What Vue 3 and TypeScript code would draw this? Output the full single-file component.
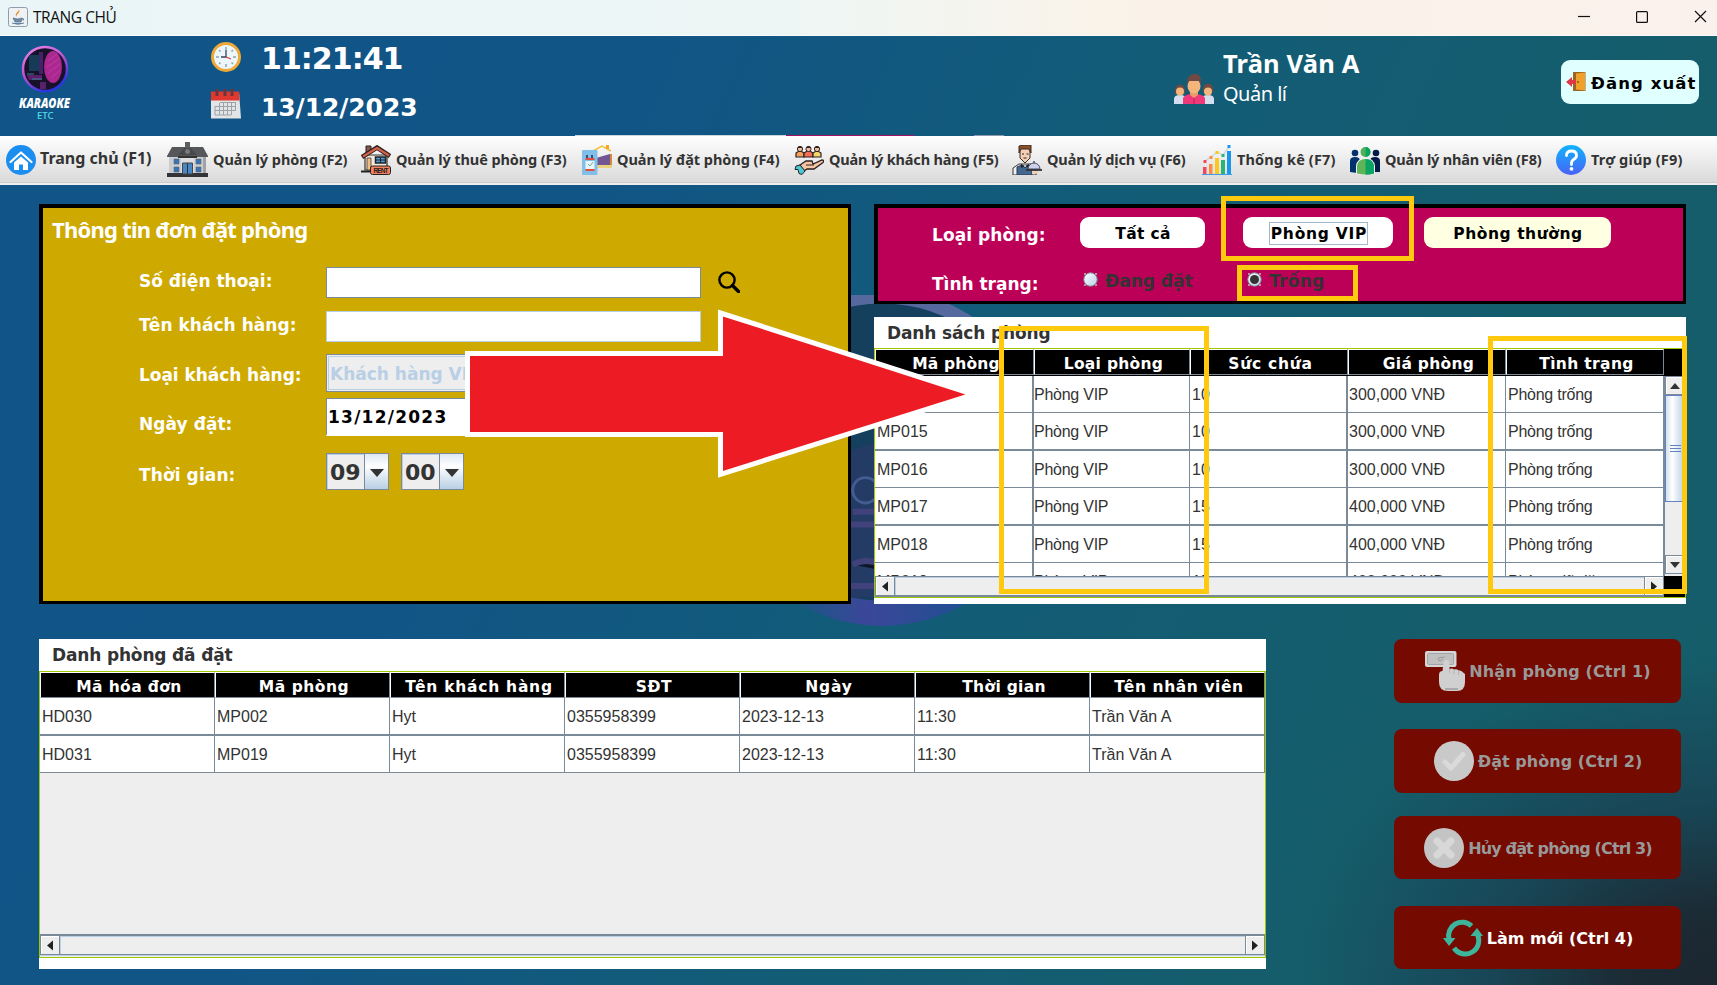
<script setup lang="ts">
import type { Directive } from 'vue'

interface MenuItem { icon: string; label: string; width: number; w: number; h: number; big?: boolean }
interface Action { icon: string; label: string; width: number; enabled: boolean }
interface Column { label: string; width: number }

// Spreads a label's letters so that it takes the given width.
const vFit: Directive<HTMLElement, number> = {
  mounted(el, { value }) {
    const count = Math.max(1, Array.from((el.textContent ?? '').trim()).length)
    const natural = el.getBoundingClientRect().width
    el.style.letterSpacing = `${((value + 1.5 - natural) / count).toFixed(3)}px`
  },
}

const menu: MenuItem[] = [
  { icon: 'home', label: 'Trang chủ (F1)', width: 110, w: 30, h: 30, big: true },
  { icon: 'building', label: 'Quản lý phòng (F2)', width: 133, w: 41, h: 35 },
  { icon: 'rent', label: 'Quản lý thuê phòng (F3)', width: 169, w: 30, h: 30 },
  { icon: 'booking', label: 'Quản lý đặt phòng (F4)', width: 161, w: 30, h: 30 },
  { icon: 'clients', label: 'Quản lý khách hàng (F5)', width: 168, w: 30, h: 30 },
  { icon: 'waiter', label: 'Quản lý dịch vụ (F6)', width: 137, w: 30, h: 30 },
  { icon: 'chart', label: 'Thống kê (F7)', width: 97, w: 30, h: 30 },
  { icon: 'staff', label: 'Quản lý nhân viên (F8)', width: 155, w: 30, h: 30 },
  { icon: 'help', label: 'Trợ giúp (F9)', width: 90, w: 30, h: 30 },
]

const roomColumns: Column[] = [
  { label: 'Mã phòng', width: 86 },
  { label: 'Loại phòng', width: 98 },
  { label: 'Sức chứa', width: 83 },
  { label: 'Giá phòng', width: 90 },
  { label: 'Tình trạng', width: 93 },
]

const rooms: string[][] = [
  ['MP014', 'Phòng VIP', '10', '300,000 VNĐ', 'Phòng trống'],
  ['MP015', 'Phòng VIP', '10', '300,000 VNĐ', 'Phòng trống'],
  ['MP016', 'Phòng VIP', '10', '300,000 VNĐ', 'Phòng trống'],
  ['MP017', 'Phòng VIP', '15', '400,000 VNĐ', 'Phòng trống'],
  ['MP018', 'Phòng VIP', '15', '400,000 VNĐ', 'Phòng trống'],
  ['MP019', 'Phòng VIP', '15', '400,000 VNĐ', 'Phòng đã đặt'],
]

const bookingColumns: Column[] = [
  { label: 'Mã hóa đơn', width: 104 },
  { label: 'Mã phòng', width: 89 },
  { label: 'Tên khách hàng', width: 146 },
  { label: 'SĐT', width: 35 },
  { label: 'Ngày', width: 46 },
  { label: 'Thời gian', width: 82 },
  { label: 'Tên nhân viên', width: 128 },
]

const bookings: string[][] = [
  ['HD030', 'MP002', 'Hyt', '0355958399', '2023-12-13', '11:30', 'Trần Văn A'],
  ['HD031', 'MP019', 'Hyt', '0355958399', '2023-12-13', '11:30', 'Trần Văn A'],
]

const actions: Action[] = [
  { icon: 'tap', label: 'Nhận phòng (Ctrl 1)', width: 180, enabled: false },
  { icon: 'check', label: 'Đặt phòng (Ctrl 2)', width: 163, enabled: false },
  { icon: 'cancel', label: 'Hủy đặt phòng (Ctrl 3)', width: 182, enabled: false },
  { icon: 'refresh', label: 'Làm mới (Ctrl 4)', width: 145, enabled: true },
]
</script>

<template>
  <div class="window">
    <svg class="defs" width="0" height="0" aria-hidden="true">
      <defs>
        <linearGradient id="gHelp" x1="0" y1="0" x2="0" y2="1"><stop offset="0" stop-color="#0fb4ff" /><stop offset="1" stop-color="#4a62f6" /></linearGradient>
        <linearGradient id="gRing" x1="0" y1="0" x2="0.5" y2="1"><stop offset="0" stop-color="#f08ae8" /><stop offset=".55" stop-color="#b84fd0" /><stop offset="1" stop-color="#2b35e0" /></linearGradient>
        <linearGradient id="gRadio" x1="0" y1="0" x2="1" y2="1"><stop offset="0" stop-color="#fff" /><stop offset="1" stop-color="#b8cfe5" /></linearGradient>
        <linearGradient id="gDisc" x1="0" y1="0" x2="1" y2="0"><stop offset="0.2" stop-color="#125a80" /><stop offset=".45" stop-color="#3b4799" /><stop offset=".8" stop-color="#1c4f90" /></linearGradient>
      </defs>
      <symbol id="home" viewBox="0 0 30 30">
        <circle cx="15" cy="15" r="15" fill="#1b8ef0" />
        <path d="M4.500 17 15 7.500 25.500 17" fill="none" stroke="#fff" stroke-width="2.200" stroke-linecap="round" stroke-linejoin="round" />
        <path d="M8 17.500 15 11.500l7 6V25h-5v-5.500h-4V25H8z" fill="#fff" />
      </symbol>
      <symbol id="building" viewBox="0 0 41 35">
        <path d="M2 14h37v18H2z" fill="#c9ccd0" /><path d="M14 13h13v19H14z" fill="#dcdee1" />
        <path d="M39 14v18h-3V14z" fill="#a0a2a6" />
        <path d="M0 14 5 5h31l5 9v1H0z" fill="#55575a" /><path d="M11 13 20.500 3 30 13z" fill="#46484b" /><path d="M11 14h19v2H11z" fill="#333" />
        <path d="M18 0h5v6h-5z" fill="#5e5e60" /><path d="M0 31h41v4H0z" fill="#333437" />
        <path d="M7 17h5v5H7zM7 25h5v5H7zM29 17h5v5h-5zM29 25h5v5h-5z" fill="#3674b8" stroke="#666" stroke-width=".6" />
        <path d="M15.500 21h10v11h-10z" fill="#4a87c6" stroke="#444" /><path d="M20.500 21v11" stroke="#333" />
        <circle cx="20.500" cy="9.500" r="2.500" fill="#77797c" />
      </symbol>
      <symbol id="rent" viewBox="0 0 30 30">
        <path d="M4 10h22v15H4z" fill="#f3e9df" stroke="#333" stroke-width="1.200" />
        <path d="M5 1h5v7H5z" fill="#8b5446" stroke="#222" /><path d="M1 12 16 2.500 29 11" fill="none" stroke="#33231f" stroke-width="4.500" /><path d="M2 11.500 16 3 28 10.500" fill="none" stroke="#d4634b" stroke-width="2.200" />
        <path d="M6 13h4v12H6z" fill="#f0bd80" stroke="#222" stroke-width=".7" /><path d="M14.500 12h10v6h-10z" fill="#4d9bdd" stroke="#222" stroke-width="1.500" /><path d="M19.500 12v6M14.500 15h10" stroke="#222" />
        <path d="M0 26.500h10" stroke="#222" stroke-width="2" />
        <rect x="9.500" y="21" width="20" height="8.500" rx="2" fill="#f5805f" stroke="#222" />
        <text x="12.500" y="27.800" font-family="Liberation Sans" font-weight="bold" font-size="6.500" textLength="15" fill="#222">RENT</text>
      </symbol>
      <symbol id="booking" viewBox="0 0 30 30">
        <path d="M11 6l9-5 9 5" fill="none" stroke="#f0c23e" stroke-width="1.500" /><path d="M24 0h3v4h-3z" fill="#f5a423" />
        <path d="M14 13l14-4v11H14z" fill="#725693" /><path d="M28 9h2v13h-2z" fill="#d68a35" /><path d="M14 20h16v3H14z" fill="#ead27e" />
        <rect x="0" y="5" width="15.500" height="25" rx="1" fill="#82bfe8" /><path d="M3.500 16h9v8h-9z" fill="#e8f5fc" />
        <path d="M4 10h2v3H4zM9 10h2v3H9z" fill="#39507b" /><path d="M3.500 13h9v2h-9zM3.500 24h9v2h-9z" fill="#e34c3d" /><path d="M6 19l2 2 3-4" stroke="#76ad8b" fill="none" />
      </symbol>
      <symbol id="clients" viewBox="0 0 30 30">
        <g stroke="#2c2020" stroke-width="1.200"><path d="M2 12V8l3-2h2l3 2v4z" fill="#f4a05a" /><path d="M10 12V8l3-2h3l3 2v4z" fill="#f26e54" /><path d="M19 12V8l3-2h2l3 2v4z" fill="#f4d568" /></g>
        <circle cx="6" cy="4" r="2.600" fill="#efc3a0" stroke="#2c2020" /><circle cx="14.500" cy="4" r="2.600" fill="#efc3a0" stroke="#2c2020" /><circle cx="23" cy="4" r="2.600" fill="#efc3a0" stroke="#2c2020" />
        <path d="M3.500 3a2.700 2.700 0 0 1 5 0zM12 3a2.700 2.700 0 0 1 5 0zM20.500 3a2.700 2.700 0 0 1 5 0z" fill="#2c2020" />
        <path d="M6 20l6-4h6l1 3 9-4c2 0 2 1.500 1 2.500L20 24h-7l-3 2z" fill="#f6c5a6" stroke="#2c2020" stroke-width="1.300" /><path d="M12 20h8" stroke="#2c2020" />
        <path d="M2 21l4-1 5 6-3 3.500-3-1-1-4H1z" fill="#49c8d6" stroke="#2c2020" />
      </symbol>
      <symbol id="waiter" viewBox="0 0 30 30">
        <path d="M1 30v-7l6-4h12l5 4v7z" fill="#f2f2f4" stroke="#333" /><path d="M5 30v-8l5-2 3 3 3-3 4 2v8z" fill="#42688f" stroke="#2a3b52" />
        <path d="M8 3h10v10l-5 5-5-5z" fill="#f4cfb4" stroke="#3b2a22" /><path d="M7 8V1l6-1h6v8l-2-4H9z" fill="#8a4f24" stroke="#3b2a22" /><path d="M10 9h2M14.500 9h2M11.500 13h3" stroke="#222" />
        <path d="M9 19l4 2 4-2v4l-4-2-4 2z" fill="#222" /><path d="M16 24a6 6 0 0 1 12 0z" fill="#cfd0ea" stroke="#444b66" /><path d="M14 25h16" stroke="#333" stroke-width="1.800" /><path d="M20 26h6l-2 3h-4z" fill="#f4cfb4" /><circle cx="22" cy="17" r="1" fill="#555" />
      </symbol>
      <symbol id="chart" viewBox="0 0 30 30">
        <path d="M1 22h3.500v7H1z" fill="#f2475b" /><path d="M7 19h3.500v10H7z" fill="#fb8b42" /><path d="M13 13h4v16h-4z" fill="#fbc91d" /><path d="M19 15h4v14h-4z" fill="#2ab573" /><path d="M25 6h4v23h-4z" fill="#1798ee" />
        <path d="M3 16 9 12l6-5 6 3 6-8" fill="none" stroke="#cad5e0" stroke-width="1.300" />
        <path d="M1.500 15h3v3h-3z" fill="#f2475b" /><path d="M7.500 11h3v3h-3z" fill="#fb8b42" /><path d="M13.500 6h3v3h-3z" fill="#fbc91d" /><path d="M19.500 9h3v3h-3z" fill="#2ab573" /><path d="M25.500 0h3v3h-3z" fill="#1798ee" /><path d="M0 29.500h30" stroke="#3c9ce5" />
      </symbol>
      <symbol id="staff" viewBox="0 0 30 30">
        <g fill="#03306e"><circle cx="5" cy="8" r="3.300" /><path d="M0 27V16q0-4 5-4t5 4v9l-3 3z" /></g><g fill="#031c48"><circle cx="26" cy="8" r="3.300" /><path d="M20 27V16q0-4 5-4t5 4v11z" /></g>
        <circle cx="15.500" cy="7" r="5" fill="#52b058" /><path d="M6 29V21q1-8 9.500-8T25 21v8q-9 2-19 0z" fill="#f1f1f1" /><path d="M7 28.500V21q1-7 8.500-7T24 21v7.500q-8.500 2-17 0z" fill="#5fb457" /><path d="M15.500 2a5 5 0 0 1 0 10M15.500 14q7.500 0 8.500 7v7.500q-4 1.200-8.500 1.200z" fill="#0aa563" />
      </symbol>
      <symbol id="help" viewBox="0 0 30 30">
        <circle cx="15" cy="15" r="15" fill="url(#gHelp)" />
        <path d="M10.500 10.500q0-4.500 5-4.500t5 4.500q0 2.300-2.500 3.700T15.500 18v1.500" fill="none" stroke="#fff" stroke-width="2.800" stroke-linecap="round" /><circle cx="15.500" cy="23.800" r="1.900" fill="#fff" />
      </symbol>
      <symbol id="tap" viewBox="0 0 40 40">
        <rect x="0" y="0" width="31.500" height="16" rx="2" fill="#d6d6d6" /><rect x="2.500" y="2.500" width="26" height="11" rx="1" fill="#c0c0c0" stroke="#a5a5a5" /><path d="M13 9q0-3 3-2.500T20 5.500M13 9q3 2 5-1" fill="none" stroke="#999" />
        <path d="M18.500 12q0-3 3-3t3 3v6q3-1 4.500.500 3-1 4.500 1 3-.5 4 1.500l2.500 2v8q0 9-8 9h-9q-9 0-9-9V24q0-4 3.500-4z" fill="#d0d0d0" /><path d="M20 38h13" stroke="#aaa" stroke-width="2" /><path d="M24.500 18v4M29 18.500V23M33.500 19.500V24" stroke="#b5b5b5" />
      </symbol>
      <symbol id="check" viewBox="0 0 40 40"><circle cx="20" cy="20" r="20" fill="#c9c9c9" /><path d="M11 21l6 6L29 13.500" fill="none" stroke="#dadada" stroke-width="5" stroke-linecap="round" stroke-linejoin="round" /></symbol>
      <symbol id="cancel" viewBox="0 0 40 40"><circle cx="20" cy="20" r="20" fill="#c4c4c4" /><path d="M13 13l14 14M27 13 13 27" stroke="#d8d8d8" stroke-width="7" stroke-linecap="round" /></symbol>
      <symbol id="refresh" viewBox="0 0 40 40">
        <g fill="none" stroke="#3db59d" stroke-width="5"><path d="M6 21A13.500 13.500 0 0 1 28.500 8" /><path d="M33.500 15A13.500 13.500 0 0 1 11 30" /></g>
        <path d="M0 20h12.500L6 28zM27.500 18h12.500L34 10z" fill="#3db59d" />
      </symbol>
    </svg>

    <svg class="backdrop" viewBox="0 0 340 340" aria-hidden="true">
      <circle cx="170" cy="170" r="169" fill="url(#gDisc)" />
      <circle cx="170" cy="160" r="153" fill="#143f5d" />
      <path d="M90 190q80-55 80-30v150H70z" fill="#2a3a69" opacity=".7" />
      <path d="M14 120a162 162 0 0 1 312 0" fill="none" stroke="#56699f" stroke-width="14" />
      <path d="M140 222h28M130 235h50M140 276q20-10 40 8M135 298h40" stroke="#56488a" stroke-width="6" opacity=".6" />
      <circle cx="153" cy="200" r="13" fill="none" stroke="#435c91" stroke-width="3" />
    </svg>

    <div class="titlebar">
      <svg class="java" viewBox="0 0 20 20"><rect x=".5" y=".5" width="19" height="19" rx="2" fill="#f0f1f3" stroke="#8d9eae" /><path d="M10 2q3 2 0 4.500T10 11Q6 8 9 5.500T10 2" fill="#e98b2d" /><path d="M5 11q5 2 9 0l-1 4H7zM4 16q6 2.500 12 0M14 11.500q3 0 1 2" fill="#6f8ea8" stroke="#55748f" stroke-width=".8" /></svg>
      <span v-fit="82" class="caption">TRANG CHỦ</span>
      <svg class="controls" viewBox="0 0 130 14" fill="none" stroke="#111" stroke-width="1.200"><path d="M0 6.500h12" /><rect x="58.600" y="1.600" width="10.800" height="10.800" rx="1" /><path d="M117 1l11 11M128 1l-11 11" /></svg>
    </div>

    <header class="header">
      <svg class="logo" viewBox="0 0 60 80">
        <circle cx="30" cy="26" r="22" fill="#17112a" stroke="url(#gRing)" stroke-width="2.500" />
        <path d="M14 12h11v16H14z" fill="#163b56" /><path d="M24 9h4v22h-4z" fill="#442267" /><ellipse cx="38" cy="24" rx="9" ry="16" fill="#ac278f" /><path d="M33 18l9-7M32 24l13-9M33 30l12-9M36 35l9-8" stroke="#bf43a5" stroke-width=".8" /><path d="M12 32h15v5H14zM25 39h6v7h-6z" fill="#5a2069" /><path d="M17 36h10M12 31h7" stroke="#318797" />
        <text x="4" y="65" font-family="Noto Sans" font-weight="900" font-style="italic" font-size="14.500" textLength="51" lengthAdjust="spacingAndGlyphs" fill="#fff">KARAOKE</text>
      </svg>
      <span class="etc">ETC</span>
      <div class="clock">
        <div class="clock-row">
          <svg class="i30 t3" viewBox="0 0 30 30"><circle cx="15" cy="15" r="13.500" fill="#edf6fa" stroke="#eda936" stroke-width="3" /><path d="M15 5v3M15 22v3M5 15h3M22 15h3M8 8l1.500 1.500M22 8l-1.500 1.500M8 22l1.500-1.500M22 22l-1.500-1.500" stroke="#8fa3b4" stroke-width="1.500" /><path d="M15 8v7h-5" fill="none" stroke="#35475c" stroke-width="1.300" /><path d="M15 15l5 2" stroke="#e23b3b" stroke-width="1.200" /></svg>
          <span v-fit="140" class="time wide-face">11:21:41</span>
        </div>
        <div class="clock-row">
          <svg class="i30" viewBox="0 0 30 30"><path d="M0 3h28l2 26.500H0z" fill="#e2e4e6" /><path d="M0 2.500h28l.5 9H0z" fill="#e0382f" /><path d="M6 0v7M14 0v7M21 0v7" stroke="#69363b" stroke-width="3" /><g stroke="#9ca2a8" fill="none"><path d="M9 13.500h16M4 17.500h21M4 21.500h21M4 26h16M4 17v9M8.500 14v12M12.500 14v12M16.500 14v12M20.500 14v12M24.500 14v8" /></g></svg>
          <span v-fit="155" class="date wide-face">13/12/2023</span>
        </div>
      </div>
      <div class="user">
        <svg class="people" viewBox="0 0 40 30"><path d="M0 30v-5q0-4 6-4t6 4v5zM28 30v-5q0-4 6-4t6 4v5z" fill="#d3dfef" /><path d="M1 20q-1-9 5-9.500 6 .5 5 9.500zM29 18q-1-8 5-8.500 6 .5 5 8.500z" fill="#704943" /><circle cx="6" cy="17.500" r="4" fill="#f3b57c" /><circle cx="34" cy="17.500" r="4" fill="#f3b57c" /><path d="M9 30v-6q2-4 11-4t11 4v6z" fill="#f0397a" /><path d="M16 17h8v4l-4 3-4-3z" fill="#e79c69" /><ellipse cx="20" cy="12" rx="6.500" ry="7.500" fill="#f3b57c" /><path d="M13 11q-1-10 7-11 8-1 7 11l-2-4H15z" fill="#704943" /><path d="M20 24v6" stroke="#b81f55" /></svg>
        <div class="who"><span v-fit="135" class="name">Trần Văn A</span><span v-fit="62" class="role">Quản lí</span></div>
      </div>
      <button class="logout">
        <svg viewBox="0 0 20 20"><path d="M7 0h12.500v19H7z" fill="#9b6420" /><path d="M10 1.500l9-1v18l-9-1z" fill="#efa12b" /><circle cx="12" cy="10" r=".9" fill="#8b4d0d" /><path d="M0 10l6-5v3h4v4H6v3z" fill="#dc3848" /></svg>
        <span v-fit="104" class="wide-face">Đăng xuất</span>
      </button>
      <div class="peek"><i class="light" /><i class="pink" /><i class="gray" /></div>
    </header>

    <nav class="menu">
      <div v-for="m in menu" :key="m.icon" class="menu-item" :class="{ big: m.big }">
        <svg :width="m.w" :height="m.h"><use :href="'#' + m.icon" /></svg>
        <span v-fit="m.width">{{ m.label }}</span>
      </div>
    </nav>

    <main class="content">
      <section class="form-panel">
        <h2><span v-fit="254">Thông tin đơn đặt phòng</span></h2>
        <div class="form wide-face">
          <label class="a"><span v-fit="132">Số điện thoại:</span></label>
          <div class="field-row"><div class="input focus" /><svg class="search" viewBox="0 0 22 22"><circle cx="9" cy="9" r="7.600" fill="none" stroke="#000" stroke-width="2.400" /><path d="M14.500 14.500l6 6" stroke="#000" stroke-width="3.400" stroke-linecap="round" /></svg></div>
          <label class="a"><span v-fit="156">Tên khách hàng:</span></label>
          <div class="field-row"><div class="input" /></div>
          <label class="b"><span v-fit="161">Loại khách hàng:</span></label>
          <div class="field-row"><div class="combo"><span v-fit="149">Khách hàng VIP</span></div></div>
          <label class="c"><span v-fit="92">Ngày đặt:</span></label>
          <div class="field-row"><div class="input datebox"><span v-fit="118">13/12/2023</span></div></div>
          <label class="d"><span v-fit="95">Thời gian:</span></label>
          <div class="field-row times">
            <div v-for="t in ['09', '00']" :key="t" class="mini"><span v-fit="29">{{ t }}</span><div class="drop"><svg viewBox="0 0 14 8"><path d="M0 0h14L7 8z" fill="#333" /></svg></div></div>
          </div>
        </div>
      </section>

      <div class="right">
        <section class="filter wide-face">
          <b><span v-fit="112">Loại phòng:</span></b>
          <button class="all"><span v-fit="54">Tất cả</span></button>
          <button class="vip"><span class="focusbox"><span v-fit="95">Phòng VIP</span></span></button>
          <button class="normal"><span v-fit="128">Phòng thường</span></button>
          <b class="second"><span v-fit="105">Tình trạng:</span></b>
          <div class="radio"><svg viewBox="0 0 15 15"><path d="M1 1h2v2H1zM12 1h2v2h-2zM1 12h2v2H1zM12 12h2v2h-2z" fill="#c98aa8" /><circle cx="7.500" cy="7.500" r="6.700" fill="url(#gRadio)" stroke="#7a8a99" /></svg><span v-fit="86">Đang đặt</span></div>
          <div class="radio on"><svg viewBox="0 0 15 15"><path d="M1 1h2v2H1zM12 1h2v2h-2zM1 12h2v2H1zM12 12h2v2h-2z" fill="#c98aa8" /><circle cx="7.500" cy="7.500" r="6.700" fill="url(#gRadio)" stroke="#7a8a99" /><circle cx="7.500" cy="7.500" r="4.500" fill="#333" /></svg><span v-fit="54">Trống</span></div>
        </section>

        <section class="rooms">
          <h3><span v-fit="162" class="wide-face">Danh sách phòng</span></h3>
          <div class="scrollpane">
            <div class="room-head">
              <div v-for="c in roomColumns" :key="c.label" class="th"><span v-fit="c.width">{{ c.label }}</span></div>
            </div>
            <div class="viewport">
              <div v-for="r in rooms" :key="r[0]" class="tr"><div v-for="(v, i) in r" :key="i" class="td">{{ v }}</div></div>
            </div>
            <div class="vbar">
              <div class="vbtn"><svg viewBox="0 0 10 6"><path d="M0 6h10L5 0z" fill="#333" /></svg></div>
              <div class="thumb"><i /><i /><i /></div>
              <div class="vbtn bottom"><svg viewBox="0 0 10 6"><path d="M0 0h10L5 6z" fill="#333" /></svg></div>
            </div>
            <div class="hbar"><div class="hbtn"><svg viewBox="0 0 6 10"><path d="M6 0v10L0 5z" fill="#222" /></svg></div><div class="track" /><div class="hbtn end"><svg viewBox="0 0 6 10"><path d="M0 0v10l6-5z" fill="#222" /></svg></div></div>
            <div class="corner" />
          </div>
        </section>
      </div>

      <section class="bookings">
        <h3><span v-fit="179" class="wide-face">Danh phòng đã đặt</span></h3>
        <div class="bookpane">
          <div class="brow bhead"><div v-for="c in bookingColumns" :key="c.label" class="th"><span v-fit="c.width">{{ c.label }}</span></div></div>
          <div v-for="b in bookings" :key="b[0]" class="brow tr"><div v-for="(v, i) in b" :key="i" class="td">{{ v }}</div></div>
          <div class="hbar wide"><div class="hbtn"><svg viewBox="0 0 6 10"><path d="M6 0v10L0 5z" fill="#222" /></svg></div><div class="track" /><div class="hbtn end"><svg viewBox="0 0 6 10"><path d="M0 0v10l6-5z" fill="#222" /></svg></div></div>
        </div>
      </section>

      <aside class="actions">
        <button v-for="a in actions" :key="a.icon" class="action wide-face" :class="{ enabled: a.enabled }">
          <svg width="40" height="40"><use :href="'#' + a.icon" /></svg><span v-fit="a.width">{{ a.label }}</span>
        </button>
      </aside>
    </main>

    <svg class="arrow" viewBox="464 305 520 176" aria-hidden="true">
      <path d="M467.500 353.500H720.500V313L974 394.500 720.500 474.300V434.500H467.500z" fill="#ed1c24" stroke="#fff" stroke-width="5" stroke-linejoin="miter" />
    </svg>
    <div class="mark m1" /><div class="mark m2" /><div class="mark m3" /><div class="mark m4" />
  </div>
</template>

<style>
html, body { margin: 0; overflow: hidden; }
</style>

<style scoped>
* { box-sizing: border-box; }
.window { position: relative; width: 1717px; height: 985px; overflow: hidden; font-family: "Noto Sans", "DejaVu Sans", sans-serif; font-weight: 700; color: #fff;
  background: radial-gradient(ellipse 420px 330px at 100% 100%, #1c2730 0%, rgba(28, 39, 48, .95) 20%, rgba(25, 65, 82, .8) 55%, rgba(21, 93, 106, 0) 100%), linear-gradient(115deg, #115487 0%, #115587 30%, #125c78 54%, #155d6b 80%, #155d69 100%); }
.window span { white-space: nowrap; }
.wide-face, .th { font-family: "DejaVu Sans", Verdana, sans-serif; }
[class] > span, h2 > span, h3 > span, b > span, label > span { display: inline-block; flex: none; }
h2, h3 { margin: 0; font-weight: 700; }
button { border: 0; padding: 0; font: inherit; }
svg { display: block; flex: none; }
.defs { position: absolute; }
.backdrop { position: absolute; left: 716px; top: 295px; width: 332px; height: 332px; }

.titlebar { position: relative; height: 36px; display: flex; align-items: center; padding: 0 9px 2px 8px; background: linear-gradient(90deg, #eaf5f7 0%, #edf6f5 45%, #faf2e8 66%, #faf1ec 100%); border-bottom: 1px solid #fafafa; }
.java { width: 20px; height: 20px; }
.caption { margin-left: 5px; font: 400 15.500px/24px "Open Sans", "Noto Sans", sans-serif; color: #111; padding-top: 1px; }
.controls { width: 130px; height: 14px; margin-left: auto; }

.header { position: relative; height: 100px; display: grid; grid-template-columns: 211px 963px 387px 138px; }
.logo { width: 60px; height: 80px; margin: 7px 0 0 15px; }
.etc { position: absolute; left: 37px; top: 73px; font-size: 9.500px; line-height: 13px; font-weight: 500; color: #52dbea; }
.clock { padding-top: 3px; }
.clock-row { display: flex; height: 50px; }
.i30 { width: 30px; height: 30px; }
.t3 { margin-top: 3px; }
.time { margin-left: 20px; font-size: 30px; line-height: 39px; height: 39px; }
.date { margin: 3px 0 0 20px; font-size: 25px; line-height: 31px; height: 31px; }
.user { display: flex; }
.people { width: 40px; height: 30px; margin-top: 38px; }
.who { display: flex; flex-direction: column; align-items: flex-start; margin-left: 9px; padding-top: 11px; }
.name { font-size: 25.500px; line-height: 32px; }
.role { font-size: 20px; line-height: 28px; font-weight: 400; padding-top: 1px; }
.logout { margin-top: 24px; width: 138px; height: 44px; border-radius: 9px; background: #e0ffff; color: #000; display: flex; align-items: center; padding-left: 5px; font-size: 16.500px; gap: 5px; }
.logout svg { width: 20px; height: 20px; }
.logout span { padding-top: 2px; }
.peek { position: absolute; left: 575px; bottom: 0; height: 1px; display: flex; }
.peek i { height: 1px; }
.light { width: 211px; background: #c9d6df; }
.pink { width: 128px; background: #a1125f; }
.gray { width: 30px; margin-left: 60px; background: #8c9aac; }

.menu { height: 49px; padding-left: 6px; display: grid; grid-template-columns: 161px 194px 221px 212px 218px 190px 148px 206px 1fr; align-items: center; background: linear-gradient(#fff, #dadada 46px, #ccc 46px, #ccc 47px, #eee 47px); color: #333; font-size: 14.500px; line-height: 20px; }
.menu-item { display: flex; align-items: center; gap: 5px; padding-bottom: 2px; height: 40px; }
.menu-item span { padding-bottom: 1px; }
.big { font-size: 16px; gap: 4px; }
.big span { padding-bottom: 3px; }

.content { display: grid; grid-template-columns: 812px 812px; column-gap: 23px; grid-template-rows: 400px 330px; row-gap: 35px; padding: 19px 0 0 39px; position: relative; }
.form-panel { border: solid #000; border-width: 4px 3px 3px 4px; background: #cea900; }
.form-panel h2 { height: 59px; padding: 6px 0 0 9px; font-size: 22px; line-height: 30px; }
.form { display: grid; grid-template-columns: 187px 1fr; grid-template-rows: 44px 43px 44px 55px 38px; padding-left: 96px; font-size: 17px; line-height: 22px; }
.a { padding-top: 3px; } .b { padding-top: 10px; } .c { padding-top: 15px; } .d { padding-top: 11px; }
.field-row { display: flex; align-items: flex-start; }
.input { width: 375px; height: 31px; background: #fff; border: 1px solid #b8cfe5; }
.focus { border-color: #7a8a99; box-shadow: inset -1px -1px #fff; }
.search { width: 22px; height: 22px; margin: 4px 0 0 17px; }
.combo { width: 375px; height: 38px; border: 1px solid #7a8a99; box-shadow: inset 0 0 0 1px #eee, inset 0 0 0 2px #b8cfe5; background: #eee; color: #b8cfe5; padding: 8px 0 0 3px; }
.datebox { height: 38px; border-color: #7a8a99; border-bottom: 2px solid #fff; color: #000; padding: 7px 0 0 1px; }
.times { gap: 12px; }
.mini { display: flex; justify-content: space-between; width: 63px; height: 37px; border: 1px solid #7a8a99; background: #eee; box-shadow: inset 1px 1px #b8cfe5; color: #333; font-size: 22px; line-height: 37px; padding-left: 3px; }
.drop { width: 24px; height: 35px; border-left: 1px solid #7a8a99; background: linear-gradient(#dde8f3, #fff 35%, #b8cfe5); display: flex; align-items: center; justify-content: center; }
.drop svg { width: 14px; height: 8px; margin-top: 2px; }

.right { display: flex; flex-direction: column; gap: 13px; }
.filter { height: 100px; border: solid #000; border-width: 4px 3px 3px 4px; background: #bd0057; display: grid; grid-template-columns: 148px 163px 181px 187px; grid-template-rows: 55px 38px; padding-left: 54px; font-size: 17px; line-height: 22px; }
.filter b { padding-top: 16px; }
.filter b.second { padding-top: 10px; }
.filter button { height: 31px; margin-top: 9px; border-radius: 9px; background: #fff; color: #000; font-size: 15.500px; line-height: 21px; display: flex; align-items: center; justify-content: center; padding: 3px 0 0 1px; }
.all { width: 125px; } .vip { width: 150px; } .filter .normal { width: 187px; background: #ffffe1; }
.focusbox { border: 1px solid #a3b8cc; height: 23px; padding: 0 0 0 1px; margin-top: -2px; line-height: 22px; }
.focusbox span { display: inline-block; }
.radio { display: flex; color: #333; padding: 7px 0 0 3px; gap: 7px; }
.radio.on { padding-left: 4px; }
.radio svg { width: 15px; height: 15px; margin-top: 2px; }
.rooms { height: 287px; background: #fff; color: #333; }
h3 { font-size: 17px; line-height: 22px; }
.rooms h3 { height: 31px; padding: 5px 0 0 13px; }
.scrollpane { height: 250px; border: 1px solid #a0c800; display: grid; grid-template-columns: 789px 21px; grid-template-rows: 27px 200px 21px; }
.room-head { grid-column: 1 / 3; display: grid; grid-template-columns: 159px 156px 158px 158px 158px; background: #000; border-bottom: 1px solid #000; }
.th { background: #000; color: #fff; border: 1px solid; border-color: #fff #7a8a99 #7a8a99 #fff; text-align: center; font-size: 15.500px; line-height: 29px; overflow: hidden; padding-left: 3px; }
.viewport { height: 200px; overflow: hidden; }
.viewport .tr { display: grid; grid-template-columns: 159px 156px 158px 158px 158px; }
.td { height: 37px; border: solid #7a8a99; border-width: 0 1px 1px 0; background: #fff; font: 400 16px/38px "Liberation Sans", Arial, sans-serif; color: #333; padding-left: 2px; white-space: nowrap; overflow: hidden; }
.tr:nth-child(even) .td { height: 38px; border-bottom-width: 2px; }
.viewport .td:nth-child(1), .viewport .td:nth-child(3) { border-right-width: 2px; }
.viewport .td:nth-child(2) { padding-left: 0; letter-spacing: -.25px; } .viewport .td:nth-child(3) { padding-left: 2px; } .viewport .td:nth-child(4) { padding-left: 1px; } .viewport .td:nth-child(5) { letter-spacing: -.25px; }
.vbar { background: #eee; border-left: 1px solid #7a8a99; display: flex; flex-direction: column; }
.vbtn { height: 19px; background: #eee; border: 1px solid #7a8a99; display: flex; align-items: center; justify-content: center; box-shadow: inset 1px 1px #fff; flex: none; }
.vbtn.bottom { margin-top: auto; margin-bottom: 2px; }
.vbtn svg { width: 10px; height: 6px; }
.thumb { height: 107px; border: 1px solid #6382bf; background: linear-gradient(90deg, #d3e0ee, #fff 35%, #b8cfe5); display: flex; flex-direction: column; align-items: center; justify-content: center; gap: 2px; }
.thumb i { width: 11px; height: 1px; background: #6382bf; }
.hbar { display: flex; height: 21px; background: #eee; border: solid #7a8a99; border-width: 1px 0 2px; }
.hbtn { width: 20px; display: flex; align-items: center; justify-content: center; border: solid #7a8a99; border-width: 0 1px; box-shadow: inset 1px 1px #fff; }
.hbtn svg { width: 6px; height: 11px; }
.track { flex: 1; box-shadow: inset 1px 1px #b8cfe5; }
.corner { background: #000; }

.bookings { width: 1227px; height: 330px; grid-column: 1 / 3; grid-row: 2; background: #fff; color: #333; }
.bookings h3 { height: 32px; padding: 5px 0 0 13px; }
.bookpane { height: 287px; border: 1px solid #a0c800; background: #eee; display: flex; flex-direction: column; }
.brow { display: grid; grid-template-columns: repeat(7, 175px); }
.bhead { height: 26px; }
.bhead .th { line-height: 28px; }
.wide { margin-top: auto; border-width: 2px 0 1px; box-shadow: 0 1px #b8cfe5; margin-bottom: 2px; }
.actions { grid-column: 2; grid-row: 2; width: 287px; margin-left: 520px; display: flex; flex-direction: column; }
.action { height: 64px; flex: none; border-radius: 8px; background: #750a00; color: #999; font-size: 16px; line-height: 22px; display: flex; align-items: center; justify-content: center; gap: 4px; padding-left: 1px; }
.action span { padding-top: 2px; }
.action:nth-child(2) { margin-top: 26px; }
.action:nth-child(3) { margin-top: 23px; height: 63px; }
.action:nth-child(4) { margin-top: 27px; height: 63px; }
.action.enabled { color: #fff; }

.arrow { position: absolute; left: 464px; top: 305px; width: 520px; height: 176px; }
.mark { position: absolute; border: 5px solid #ffc90e; }
.m1 { left: 1221px; top: 196px; width: 193px; height: 65px; }
.m2 { left: 1237px; top: 265px; width: 121px; height: 36px; }
.m3 { left: 999px; top: 326px; width: 210px; height: 268px; }
.m4 { left: 1488px; top: 336px; width: 199px; height: 258px; }
</style>
